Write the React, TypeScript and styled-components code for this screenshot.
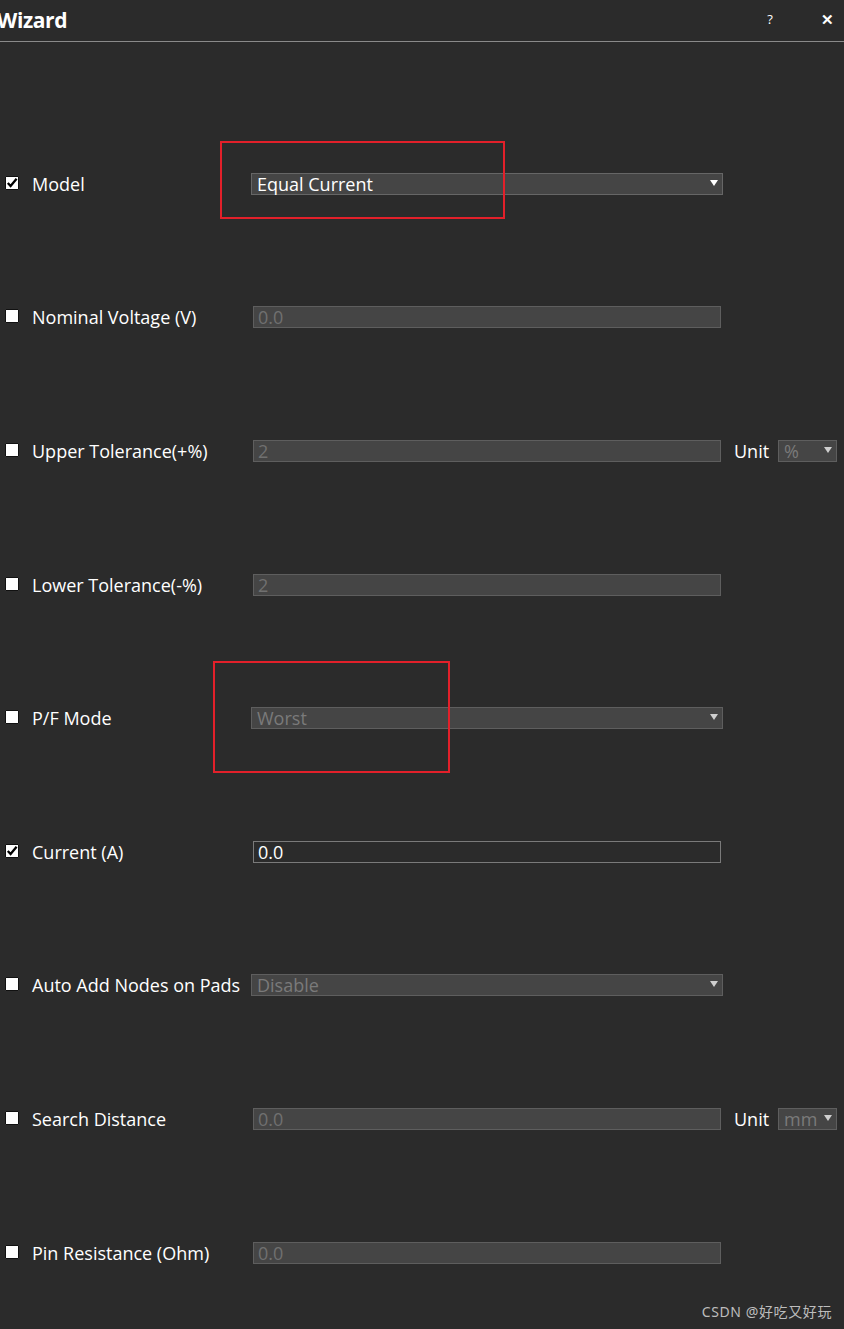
import React from "react";
import styled, { createGlobalStyle } from "styled-components";

const GlobalStyle = createGlobalStyle`
  html, body {
    margin: 0;
    padding: 0;
    background: #2b2b2b;
  }
  body {
    font-family: "Open Sans", "Noto Sans", "Liberation Sans", sans-serif;
    color: #ffffff;
  }
`;

const Page = styled.div`
  width: 844px;
  height: 1329px;
  background: #2b2b2b;
  position: relative;
  overflow: hidden;
`;

const TitleBar = styled.div`
  height: 42px;
  display: flex;
  align-items: center;
  border-bottom: 1px solid #8a8a8a;
  box-sizing: border-box;
  padding-right: 3px;
`;

const Title = styled.div`
  flex: 1;
  font-size: 21px;
  font-weight: 700;
  letter-spacing: -0.4px;
  margin-left: -3px;
  margin-top: -1px;
`;

const TitleButton = styled.div<{ $bold?: boolean }>`
  width: 28px;
  margin-left: 29px;
  text-align: center;
  font-size: ${(p) => (p.$bold ? "15px" : "13px")};
  font-weight: ${(p) => (p.$bold ? 700 : 400)};
  color: #ffffff;
  margin-top: -4px;
`;

const Body = styled.div`
  padding-top: 75px;
  display: flex;
  flex-direction: column;
`;

const Row = styled.div`
  height: 133.6px;
  display: flex;
  align-items: center;
  position: relative;
`;

const Check = styled.div`
  width: 12px;
  height: 12px;
  margin-left: 5px;
  margin-top: -2px;
  background: #ffffff;
  border: 1px solid #111;
  border-radius: 1px;
  display: flex;
  align-items: center;
  justify-content: center;
  flex-shrink: 0;
`;

const Label = styled.div`
  width: 219px;
  margin-left: 13px;
  font-size: 18px;
  white-space: nowrap;
  color: #ffffff;
`;

const Combo = styled.div<{ $disabled?: boolean; $width: number }>`
  width: ${(p) => p.$width}px;
  height: 22px;
  box-sizing: border-box;
  background: #454545;
  border: 1px solid ${(p) => (p.$disabled ? "#5e5e5e" : "#666666")};
  display: flex;
  align-items: center;
  padding-left: 5px;
  padding-right: 4px;
  font-size: 18px;
  color: ${(p) => (p.$disabled ? "#7a7a7a" : "#ffffff")};
  flex-shrink: 0;
`;

const ComboText = styled.span`
  flex: 1;
  line-height: 20px;
  white-space: nowrap;
`;

const Arrow = styled.span<{ $disabled?: boolean }>`
  width: 0;
  height: 0;
  border-left: 4px solid transparent;
  border-right: 4px solid transparent;
  border-top: 6px solid ${(p) => (p.$disabled ? "#cfcfcf" : "#ffffff")};
  margin-top: -2px;
`;

const TextInput = styled.div<{ $disabled?: boolean }>`
  width: 468px;
  height: 22px;
  margin-left: 2px;
  box-sizing: border-box;
  background: ${(p) => (p.$disabled ? "#454545" : "#2b2b2b")};
  border: 1px solid ${(p) => (p.$disabled ? "#5e5e5e" : "#7a7a7a")};
  padding-left: 4px;
  font-size: 18px;
  line-height: 21px;
  color: ${(p) => (p.$disabled ? "#707070" : "#ffffff")};
  flex-shrink: 0;
`;

const UnitLabel = styled.div`
  margin-left: 13px;
  width: 44px;
  font-size: 18px;
  color: #ffffff;
`;

const Highlight = styled.div<{ $left: number; $top: number; $w: number; $h: number }>`
  position: absolute;
  left: ${(p) => p.$left}px;
  top: ${(p) => p.$top}px;
  width: ${(p) => p.$w}px;
  height: ${(p) => p.$h}px;
  border: 2px solid #e3202a;
  box-sizing: border-box;
  pointer-events: none;
`;

const Watermark = styled.div`
  position: absolute;
  right: 12px;
  bottom: 8px;
  font-family: "Noto Sans", "Noto Sans CJK SC", sans-serif;
  font-size: 14px;
  letter-spacing: 0.6px;
  color: #bdbdbd;
`;

const CheckMark = () => (
  <svg width="12" height="12" viewBox="0 0 12 12">
    <path d="M1.8 6 L4.6 9 L10.6 1.8" fill="none" stroke="#000" strokeWidth="2.3" />
  </svg>
);

type Field =
  | { kind: "combo"; value: string; disabled?: boolean }
  | { kind: "text"; value: string; disabled?: boolean };

interface RowDef {
  label: string;
  checked?: boolean;
  field: Field;
  unit?: string;
}

const rows: RowDef[] = [
  { label: "Model", checked: true, field: { kind: "combo", value: "Equal Current" } },
  { label: "Nominal Voltage (V)", field: { kind: "text", value: "0.0", disabled: true } },
  { label: "Upper Tolerance(+%)", field: { kind: "text", value: "2", disabled: true }, unit: "%" },
  { label: "Lower Tolerance(-%)", field: { kind: "text", value: "2", disabled: true } },
  { label: "P/F Mode", field: { kind: "combo", value: "Worst", disabled: true } },
  { label: "Current (A)", checked: true, field: { kind: "text", value: "0.0" } },
  { label: "Auto Add Nodes on Pads", field: { kind: "combo", value: "Disable", disabled: true } },
  { label: "Search Distance", field: { kind: "text", value: "0.0", disabled: true }, unit: "mm" },
  { label: "Pin Resistance (Ohm)", field: { kind: "text", value: "0.0", disabled: true } },
];

export default function App() {
  return (
    <Page>
      <GlobalStyle />
      <TitleBar>
        <Title>Wizard</Title>
        <TitleButton>?</TitleButton>
        <TitleButton $bold>✕</TitleButton>
      </TitleBar>
      <Body>
        {rows.map((r, i) => (
          <Row key={r.label}>
            <Check>{r.checked && <CheckMark />}</Check>
            <Label>{r.label}</Label>
            {r.field.kind === "combo" ? (
              <Combo $width={472} $disabled={r.field.disabled}>
                <ComboText>{r.field.value}</ComboText>
                <Arrow $disabled={r.field.disabled} />
              </Combo>
            ) : (
              <TextInput $disabled={r.field.disabled}>{r.field.value}</TextInput>
            )}
            {r.unit && (
              <>
                <UnitLabel>Unit</UnitLabel>
                <Combo $width={59} $disabled>
                  <ComboText>{r.unit}</ComboText>
                  <Arrow $disabled />
                </Combo>
              </>
            )}
            {i === 0 && <Highlight $left={220} $top={24} $w={285} $h={78} />}
            {i === 4 && <Highlight $left={213} $top={10} $w={237} $h={112} />}
          </Row>
        ))}
      </Body>
      <Watermark>CSDN @好吃又好玩</Watermark>
    </Page>
  );
}
